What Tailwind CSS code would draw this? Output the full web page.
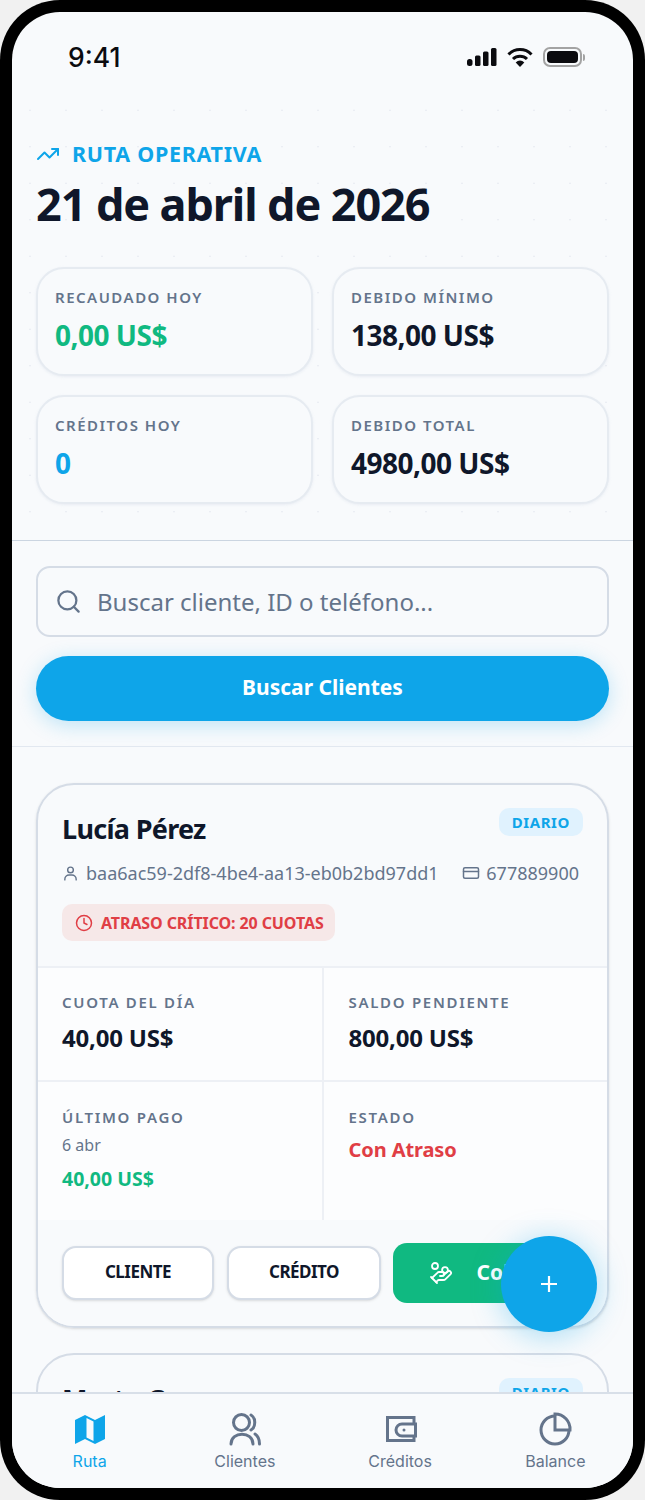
<!DOCTYPE html>
<html lang="es">
<head>
<meta charset="UTF-8">
<meta name="viewport" content="width=device-width, initial-scale=1.0">
<title>Ruta operativa</title>
<script src="https://cdn.jsdelivr.net/npm/@tailwindcss/browser@4"></script>
</head>
<body class="bg-[#f1f1f1] font-['Noto_Sans',sans-serif]">
<!-- Phone frame -->
<div class="w-[645px] h-[1500px] bg-black rounded-[60px] p-3 overflow-hidden">
  <div class="relative w-full h-full bg-[#f8fafc] rounded-[48px] overflow-hidden flex flex-col">

    <!-- Status bar -->
    <div class="h-[88px] shrink-0 flex items-start justify-between pl-[56px] pr-[48px] pt-[29px]">
      <span class="font-['Inter',sans-serif] font-medium text-[26.500px] leading-[32px] text-[#0b0b0f]">9:41</span>
      <div class="flex items-center gap-[10px] h-[32px]">
        <svg width="30" height="18" viewBox="0 0 30 18" fill="#0b0b0f"><rect x="0" y="11" width="5.500" height="7" rx="2.500"/><rect x="8" y="7.500" width="5.500" height="10.500" rx="1.500"/><rect x="16" y="3.500" width="5.500" height="14.500" rx="1.500"/><rect x="24" y="0" width="5.500" height="18" rx="1.500"/></svg>
        <svg width="26" height="19" viewBox="0 0 26 19" fill="none" stroke="#0b0b0f" stroke-width="3"><path d="M1.500 6.500a16 16 0 0 1 23 0"/><path d="M6 11a10 10 0 0 1 14 0"/><path d="M13 19l-4.300-4.600a6 6 0 0 1 8.600 0z" fill="#0b0b0f" stroke="none"/></svg>
        <div class="flex items-center gap-[1px]">
          <div class="w-[39px] h-[20px] rounded-[7px] border-2 border-[#a3a3a3] p-[2px]"><div class="w-full h-full bg-[#0b0b0f] rounded-[4px]"></div></div>
          <div class="w-[2px] h-[7px] bg-[#a3a3a3] rounded-r"></div>
        </div>
      </div>
    </div>

    <!-- Scrolling content -->
    <div class="flex-1 overflow-hidden">
      <!-- Summary -->
      <div class="px-6 pt-[20px] pb-[36px] border-b border-[#cbd5e1] bg-[radial-gradient(#e6eaf1_1px,transparent_1px)] bg-[size:36px_36.500px] bg-[position:0_-8px]">
        <div class="flex items-center gap-[12px] h-[30px] mt-[19px]">
          <svg width="24" height="24" viewBox="0 0 24 24" fill="none" stroke="#0ea5e9" stroke-width="2" stroke-linecap="round" stroke-linejoin="round"><path d="M22 7l-8.500 8.500-5-5L2 17"/><path d="M16 7h6v6"/></svg>
          <span class="text-[21.500px] font-bold tracking-[0.700px] text-[#0ea5e9]">RUTA OPERATIVA</span>
        </div>
        <h1 class="text-[45px] leading-[60px] font-bold text-[#0f172a] tracking-[-1.100px] mt-[5px]">21 de abril de 2026</h1>
        <div class="grid grid-cols-2 gap-x-[19px] gap-y-[19px] mt-[33px]">
          <div class="h-[109px] bg-[#f8fafc] border-2 border-[#e6ebf1] rounded-[28px] shadow-sm shadow-slate-200/60 px-[17px] pt-[16px]">
            <p class="text-[15px] leading-[24px] font-semibold tracking-[1.500px] text-[#64748b]">RECAUDADO HOY</p>
            <p class="text-[28px] leading-[36px] font-bold text-[#10b981] mt-[8px] tracking-[-0.500px]">0,00 US$</p>
          </div>
          <div class="h-[109px] bg-[#f8fafc] border-2 border-[#e6ebf1] rounded-[28px] shadow-sm shadow-slate-200/60 px-[17px] pt-[16px]">
            <p class="text-[15px] leading-[24px] font-semibold tracking-[1.500px] text-[#64748b]">DEBIDO MÍNIMO</p>
            <p class="text-[28px] leading-[36px] font-bold text-[#0f172a] mt-[8px] tracking-[-0.500px]">138,00 US$</p>
          </div>
          <div class="h-[109px] bg-[#f8fafc] border-2 border-[#e6ebf1] rounded-[28px] shadow-sm shadow-slate-200/60 px-[17px] pt-[16px]">
            <p class="text-[15px] leading-[24px] font-semibold tracking-[1.500px] text-[#64748b]">CRÉDITOS HOY</p>
            <p class="text-[28px] leading-[36px] font-bold text-[#0ea5e9] mt-[8px] tracking-[-0.500px]">0</p>
          </div>
          <div class="h-[109px] bg-[#f8fafc] border-2 border-[#e6ebf1] rounded-[28px] shadow-sm shadow-slate-200/60 px-[17px] pt-[16px]">
            <p class="text-[15px] leading-[24px] font-semibold tracking-[1.500px] text-[#64748b]">DEBIDO TOTAL</p>
            <p class="text-[28px] leading-[36px] font-bold text-[#0f172a] mt-[8px] tracking-[-0.500px]">4980,00 US$</p>
          </div>
        </div>
      </div>

      <!-- Search -->
      <div class="px-6 pt-[25px] pb-[25px] border-b border-[#e2e8f0]">
        <div class="h-[71px] flex items-center gap-[15px] px-[17px] bg-[#f8fafc] border-2 border-[#d5dce6] rounded-[14px]">
          <svg width="27" height="27" viewBox="0 0 24 24" fill="none" stroke="#64748b" stroke-width="2" stroke-linecap="round"><circle cx="11" cy="11" r="8"/><path d="M21 21l-4.300-4.300"/></svg>
          <span class="text-[24px] text-[#64748b]">Buscar cliente, ID o teléfono...</span>
        </div>
        <button class="w-full h-[65px] mt-[19px] pb-[2px] rounded-full bg-[#0ea5e9] shadow-[0_4px_20px_rgba(14,165,233,0.25)] text-white text-[21px] font-bold">Buscar Clientes</button>
      </div>

      <!-- Client card -->
      <div class="mx-6 mt-[36px] border-2 border-[#d5dce6] rounded-[38px] shadow-sm overflow-hidden">
        <div class="h-[181px] px-6 pt-[22px]">
          <div class="flex items-start justify-between">
            <h2 class="text-[27px] leading-[44px] font-bold text-[#0f172a] tracking-[-0.700px]">Lucía Pérez</h2>
            <span class="h-[28px] mt-[1px] px-[13px] rounded-[10px] bg-[#e0f2fe] text-[#0ea5e9] text-[15px] leading-[28px] font-bold tracking-[0.600px]">DIARIO</span>
          </div>
          <div class="flex items-center justify-between mt-[9px] pr-[4px] text-[18px] leading-[26px] text-[#64748b]">
            <span class="flex items-center gap-[7px]">
              <svg width="17" height="17" viewBox="0 0 24 24" fill="none" stroke="#64748b" stroke-width="2" stroke-linecap="round"><circle cx="12" cy="7" r="4"/><path d="M4 21v-1a6 6 0 0 1 6-6h4a6 6 0 0 1 6 6v1"/></svg>
              baa6ac59-2df8-4be4-aa13-eb0b2bd97dd1
            </span>
            <span class="flex items-center gap-[6px]">
              <svg width="18" height="18" viewBox="0 0 24 24" fill="none" stroke="#64748b" stroke-width="2" stroke-linecap="round"><rect x="2" y="5" width="20" height="14" rx="2"/><path d="M2 10h20"/></svg>
              677889900
            </span>
          </div>
          <div class="inline-flex items-center gap-[8px] h-[37px] pl-[13px] pr-[11px] mt-[18px] rounded-[10px] bg-[#f6e8e8] text-[#e03e45] text-[16px] font-bold tracking-[-0.100px]">
            <svg width="18" height="18" viewBox="0 0 24 24" fill="none" stroke="#e03e45" stroke-width="2" stroke-linecap="round"><circle cx="12" cy="12" r="10"/><path d="M12 6v6l4 2"/></svg>
            ATRASO CRÍTICO: 20 CUOTAS
          </div>
        </div>
        <div class="grid grid-cols-2 gap-[2px] bg-[#edf0f5] pt-[2px]">
          <div class="h-[112px] bg-[#fcfdfe] px-6 pt-[22px]">
            <p class="text-[15px] leading-[24px] font-semibold tracking-[1.700px] text-[#64748b]">CUOTA DEL DÍA</p>
            <p class="text-[24px] leading-[34px] font-bold text-[#0f172a] mt-[7px] tracking-[-0.200px]">40,00 US$</p>
          </div>
          <div class="h-[112px] bg-[#fcfdfe] pl-[25px] pt-[22px]">
            <p class="text-[15px] leading-[24px] font-semibold tracking-[1.700px] text-[#64748b]">SALDO PENDIENTE</p>
            <p class="text-[24px] leading-[34px] font-bold text-[#0f172a] mt-[7px] tracking-[-0.200px]">800,00 US$</p>
          </div>
          <div class="h-[138px] bg-[#fcfdfe] px-6 pt-[23px]">
            <p class="text-[15px] leading-[24px] font-semibold tracking-[1.700px] text-[#64748b]">ÚLTIMO PAGO</p>
            <p class="text-[16px] leading-[24px] text-[#64748b] mt-[4px]">6 abr</p>
            <p class="text-[19.500px] leading-[28px] font-bold text-[#10b981] mt-[8px]">40,00 US$</p>
          </div>
          <div class="h-[138px] bg-[#fcfdfe] pl-[25px] pt-[23px]">
            <p class="text-[15px] leading-[24px] font-semibold tracking-[1.700px] text-[#64748b]">ESTADO</p>
            <p class="text-[20px] leading-[30px] font-bold text-[#e03e45] mt-[6px] tracking-[-0.100px]">Con Atraso</p>
          </div>
        </div>
        <div class="h-[106px] bg-[#f8fafc] px-6 flex items-center gap-[13px]">
          <button class="w-[152px] h-[54px] pb-[2px] bg-white border-2 border-[#d5dce6] rounded-[14px] shadow-sm text-[17px] font-bold text-[#0f172a] tracking-[-0.500px]">CLIENTE</button>
          <button class="w-[154px] h-[54px] pb-[2px] bg-white border-2 border-[#d5dce6] rounded-[14px] shadow-sm text-[17px] font-bold text-[#0f172a] tracking-[-0.500px]">CRÉDITO</button>
          <button class="flex-1 -ml-[1px] h-[60px] bg-[#10b981] rounded-[14px] flex items-center justify-center gap-[24px] text-white text-[21px] font-bold">
            <svg width="24" height="24" viewBox="0 0 24 24" fill="none" stroke="#fff" stroke-width="1.800" stroke-linecap="round" stroke-linejoin="round"><path d="M11 15h2a2 2 0 1 0 0-4h-3c-.6 0-1.100.2-1.400.6L3 17"/><path d="M7 21l1.600-1.400c.3-.4.800-.6 1.400-.6h4c1.100 0 2.100-.4 2.800-1.200l4.600-4.400a2 2 0 0 0-2.750-2.910l-4.200 3.900"/><path d="M2 16l6 6"/><circle cx="16" cy="9" r="2.900"/><circle cx="6" cy="5" r="3"/></svg>
            Cobrar
          </button>
        </div>
      </div>

      <!-- Next card, cut off by the nav -->
      <div class="mx-6 mt-[25px] border-2 border-[#d5dce6] rounded-[38px] h-[120px] px-6 pt-[22px]">
        <div class="flex items-start justify-between">
          <h2 class="text-[27px] leading-[44px] font-bold text-[#0f172a] tracking-[-0.700px]">Marta Gomez</h2>
          <span class="h-[28px] mt-[1px] px-[13px] rounded-[10px] bg-[#e0f2fe] text-[#0ea5e9] text-[15px] leading-[28px] font-bold tracking-[0.600px]">DIARIO</span>
        </div>
      </div>
    </div>

    <!-- Floating button -->
    <button class="absolute left-[489px] top-[1224px] w-[96px] h-[96px] rounded-full bg-[#0ea5e9] shadow-[0_4px_30px_rgba(14,165,233,0.35)] flex items-center justify-center">
      <svg width="20" height="20" viewBox="0 0 20 20" stroke="#fff" stroke-width="2.200"><path d="M10 2v16M2 10h16"/></svg>
    </button>

    <!-- Bottom nav -->
    <nav class="absolute bottom-0 left-0 right-0 h-[96px] bg-[#f8fafc] border-t-2 border-[#d8dfe8] grid grid-cols-4 font-['Inter',sans-serif] text-[16px] leading-[24px]">
      <div class="flex flex-col items-center pt-[18px] text-[#0ea5e9]">
        <svg width="34" height="34" viewBox="0 0 34 34" fill="#0ea5e9" fill-rule="evenodd"><path d="M2 8l10-5 10 5 10-5v24l-10 5-10-5-10 5z M13.500 6v19.500l7 3.500V9.500z"/></svg>
        <span class="mt-[3px]">Ruta</span>
      </div>
      <div class="flex flex-col items-center pt-[18px] text-[#64748b]">
        <svg width="34" height="34" viewBox="0 0 34 34" fill="none" stroke="#64748b" stroke-width="3" stroke-linecap="round"><circle cx="13.500" cy="10.500" r="8"/><path d="M3 32c0-13 22-13 22 0"/><path d="M23 3c5 3 5 12 0 15"/><path d="M27 22c3 2 4.500 6 4.500 10"/></svg>
        <span class="mt-[3px]">Clientes</span>
      </div>
      <div class="flex flex-col items-center pt-[18px] text-[#64748b]">
        <svg width="34" height="34" viewBox="0 0 34 34" fill="none" stroke="#64748b" stroke-width="3"><path d="M31 12V5.500H4.500v23H31V24"/><path d="M32.500 12H19a6 6 0 0 0 0 12h13.500z"/><circle cx="21" cy="18" r="1.500" fill="#64748b" stroke="none"/></svg>
        <span class="mt-[3px]">Créditos</span>
      </div>
      <div class="flex flex-col items-center pt-[18px] text-[#64748b]">
        <svg width="34" height="34" viewBox="0 0 34 34" fill="none" stroke="#64748b" stroke-width="3"><path d="M17 4a14 14 0 1 0 14 14"/><path d="M17 2a15 15 0 0 1 15 16H17z"/></svg>
        <span class="mt-[3px]">Balance</span>
      </div>
    </nav>
  </div>
</div>
</body>
</html>
